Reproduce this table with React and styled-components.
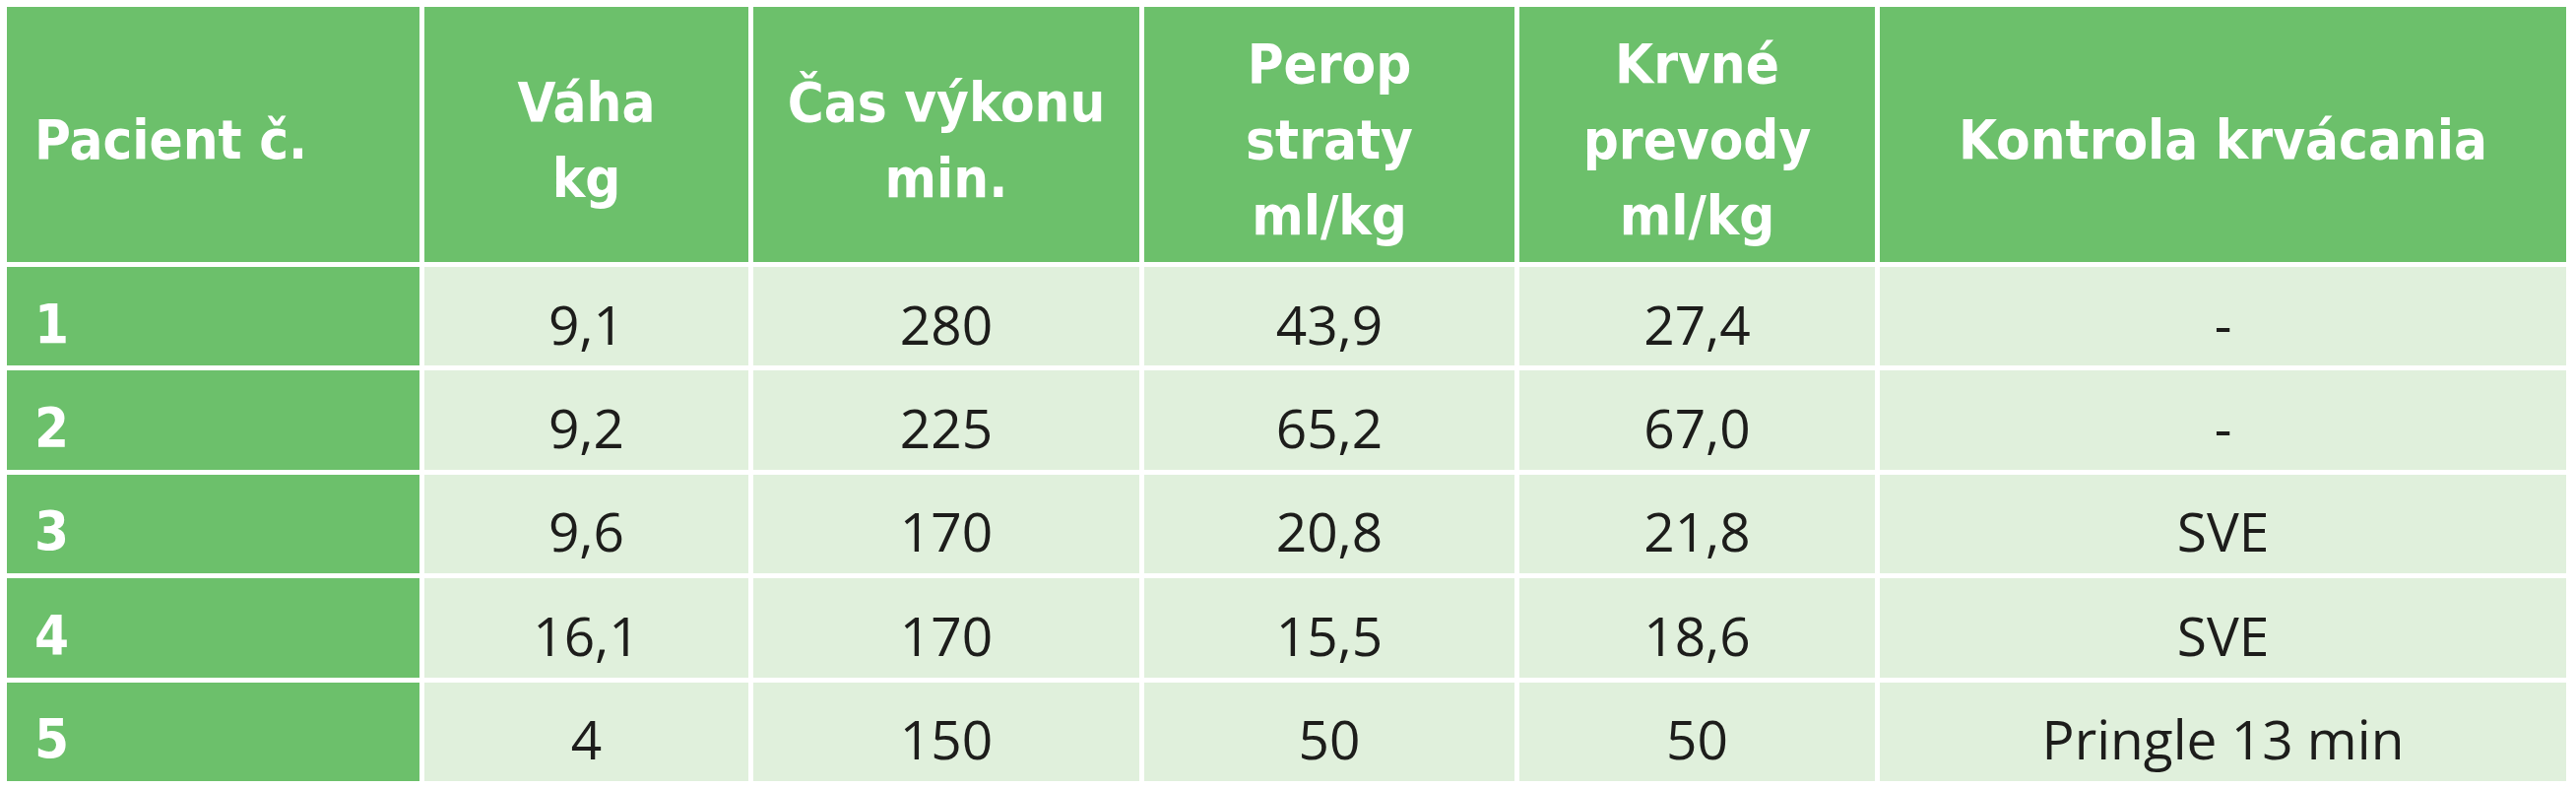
import React from 'react';
import styled, { createGlobalStyle } from 'styled-components';

const GlobalStyle = createGlobalStyle`
  html, body {
    margin: 0;
    padding: 0;
    background: #ffffff;
  }
`;

const Page = styled.div`
  padding: 7px;
  width: 2616px;
  height: 800px;
  box-sizing: border-box;
  background: #ffffff;
`;

const Grid = styled.div`
  display: grid;
  grid-template-columns: 419px 329px 392px 376px 361px 697px;
  grid-template-rows: 259px repeat(5, 1fr);
  gap: 5px;
  height: 786px;
  background: #ffffff;
`;

const HeadCell = styled.div`
  display: flex;
  align-items: center;
  justify-content: ${p => (p.$left ? 'flex-start' : 'center')};
  text-align: ${p => (p.$left ? 'left' : 'center')};
  padding: 10px 0 0 ${p => (p.$left ? '28px' : '0')};
  background: #6cc06b;
  color: #ffffff;
  font-family: "Liberation Sans Narrow", "DejaVu Sans Condensed", "DejaVu Sans", sans-serif;
  font-weight: bold;
  font-size: 56px;
  line-height: 77px;
`;

const RowLabel = styled(HeadCell)`
  padding-top: 14px;
`;

const Cell = styled.div`
  display: flex;
  align-items: center;
  justify-content: center;
  padding-top: 14px;
  background: #e0f0dc;
  color: #1d1d1b;
  font-family: "Open Sans", "Noto Sans", sans-serif;
  font-size: 55px;
`;

const headers = [
  ['Pacient č.'],
  ['Váha', 'kg'],
  ['Čas výkonu', 'min.'],
  ['Perop', 'straty', 'ml/kg'],
  ['Krvné', 'prevody', 'ml/kg'],
  ['Kontrola krvácania'],
];

const rows = [
  ['1', '9,1', '280', '43,9', '27,4', '-'],
  ['2', '9,2', '225', '65,2', '67,0', '-'],
  ['3', '9,6', '170', '20,8', '21,8', 'SVE'],
  ['4', '16,1', '170', '15,5', '18,6', 'SVE'],
  ['5', '4', '150', '50', '50', 'Pringle 13 min'],
];

export default function App() {
  return (
    <Page>
      <GlobalStyle />
      <Grid>
        {headers.map((lines, i) => (
          <HeadCell key={i} $left={i === 0}>
            <div>
              {lines.map((l, j) => <div key={j}>{l}</div>)}
            </div>
          </HeadCell>
        ))}
        {rows.map(r => r.map((v, i) => i === 0
          ? <RowLabel key={r[0] + i} $left>{v}</RowLabel>
          : <Cell key={r[0] + i}>{v}</Cell>
        ))}
      </Grid>
    </Page>
  );
}
